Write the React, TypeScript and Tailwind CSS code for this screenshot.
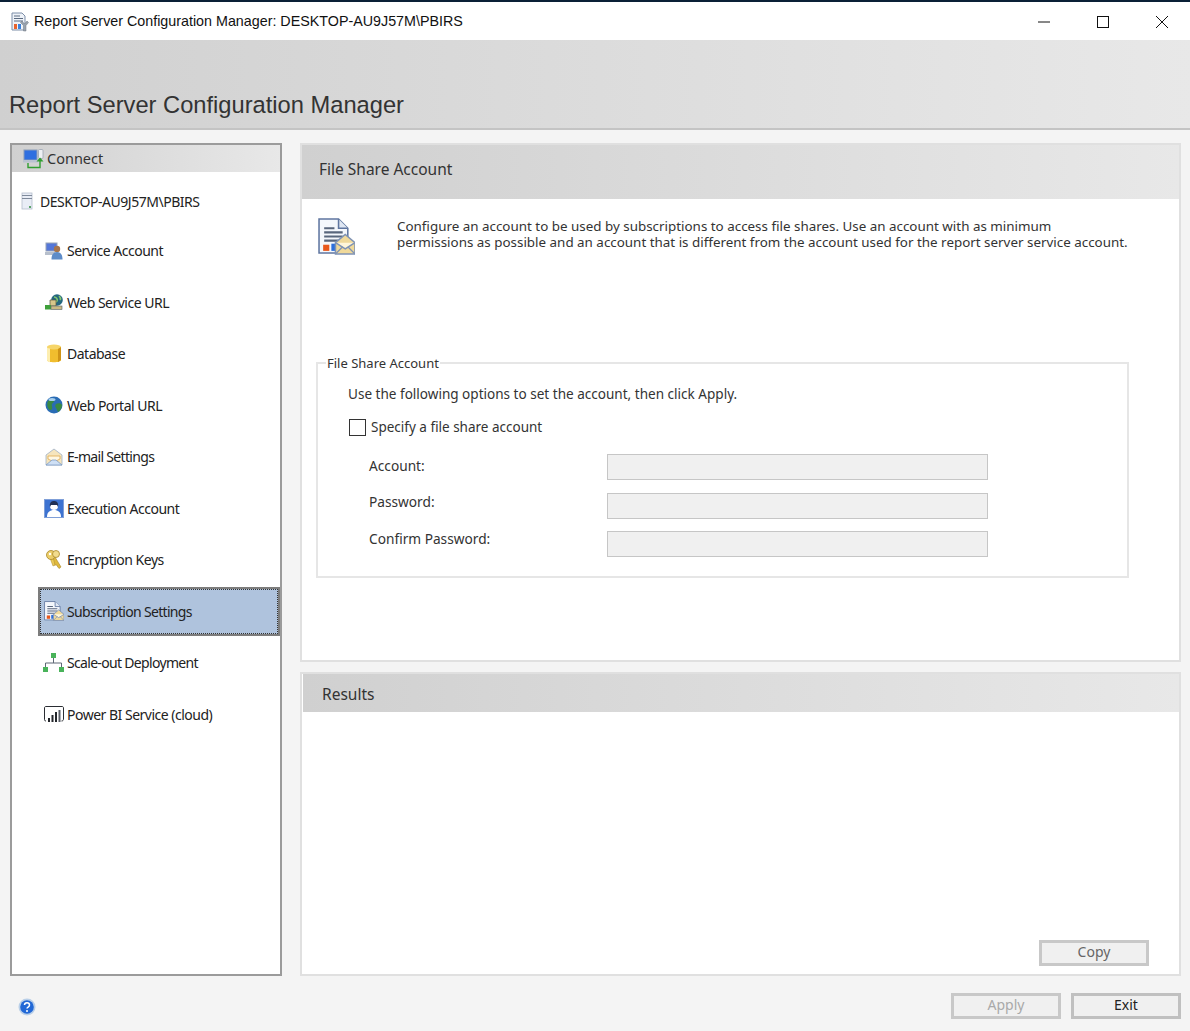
import type { ReactNode } from 'react';

const ui = 'font-["Noto_Sans",sans-serif]';

function ReportIcon({ size = 18 }: { size?: number }) {
  return (
    <svg width={size} height={size} viewBox="0 0 36 36">
      <path d="M1 1h19l9 9v24H1z" fill="#f4f7fc" stroke="#5f76a0" strokeWidth="1.5" />
      <path d="M20 1v9h9" fill="#dfe7f3" stroke="#5f76a0" strokeWidth="1.5" />
      <path d="M6 10h10M6 14h18M6 18h18M6 22h14" stroke="#58667c" strokeWidth="2" />
      <rect x="5" y="26" width="6" height="6" fill="#e8581c" />
      <rect x="13" y="25" width="6" height="7" fill="#2c6fdc" />
      <path d="M17 24l9.500-8 9.500 8v11H17z" fill="#f0d99a" stroke="#7f93b5" strokeWidth="1.500" />
      <path d="M17 24l9.500 6 9.500-6" fill="#fff6da" stroke="#7f93b5" strokeWidth="1.500" />
      <path d="M17 35l7-7M36 35l-7-7" stroke="#7f93b5" strokeWidth="1.200" />
    </svg>
  );
}

// icono de la ventana: hoja con barras y llave inglesa
function TitleIcon() {
  return (
    <svg width="19" height="20" viewBox="0 0 19 20">
      <path d="M1 1h10l3 3v14H1z" fill="#eef2f8" stroke="#7d8ea8" strokeWidth="1" />
      <path d="M3 4h6M3 6.500h9M3 9h9" stroke="#5a6a80" strokeWidth="1.200" />
      <rect x="3" y="12" width="3" height="5" fill="#e8622c" />
      <rect x="7" y="12" width="3" height="5" fill="#3b82dc" />
      <path d="M11 9l2.500 3 2.500-3 1.500 1.500-2.500 3V19h-2.500v-5.500l-3-3z" fill="#9aa3ad" stroke="#6c7680" strokeWidth="0.500" />
    </svg>
  );
}

function ConnectIcon() {
  return (
    <svg width="21" height="20" viewBox="0 0 21 20">
      <rect x="1" y="1" width="13" height="10" fill="#2f6fe0" stroke="#8a9bb8" />
      <rect x="0" y="11" width="15" height="2.500" fill="#b9c2d0" />
      <rect x="15.500" y="0.500" width="4.500" height="9" rx="1" fill="#eef0f4" stroke="#9aa3b1" strokeWidth="0.800" />
      <path d="M5 14v4.500h12v-7" fill="none" stroke="#2f9e2f" strokeWidth="1.400" />
      <path d="M13.500 12.500h7L17 8.500z" fill="#2f9e2f" />
    </svg>
  );
}

function ServerIcon() {
  return (
    <svg width="12" height="18" viewBox="0 0 12 18">
      <rect x="1" y="1" width="10" height="16" fill="#e9edf6" stroke="#b4bdcc" strokeWidth="0.800" />
      <path d="M1 3.500h10M1 6.500h10" stroke="#7f8a9b" strokeWidth="1.200" />
      <rect x="8" y="14" width="2" height="2" fill="#5aa469" />
    </svg>
  );
}

function ServiceIcon() {
  return (
    <svg width="18" height="18" viewBox="0 0 18 18">
      <rect x="1" y="1" width="11" height="8" fill="#5577d8" stroke="#98a3b6" />
      <rect x="0" y="10" width="10" height="3" fill="#b7bfcc" />
      <circle cx="12" cy="7" r="3.200" fill="#a7754c" />
      <path d="M6.500 17.500c0-5 2-7.500 5.500-7.500s5.500 2.500 5.500 7.500z" fill="#5e8cc8" />
    </svg>
  );
}

function WebServiceIcon() {
  return (
    <svg width="18" height="16" viewBox="0 0 18 16">
      <circle cx="12" cy="6" r="5.800" fill="#25677f" />
      <path d="M9 3c2 0 4 2 3 4s-3 1-3 3M14 2c1 1 2 3 1 4" stroke="#84c870" strokeWidth="1.600" fill="none" />
      <path d="M5 6h6v6H5z" fill="#d7c78a" stroke="#57533f" strokeWidth="0.700" />
      <rect x="0" y="11" width="6" height="4.500" fill="#3fa03a" />
      <rect x="6" y="12" width="11" height="3.500" fill="#c9ba83" stroke="#55606c" strokeWidth="0.600" />
    </svg>
  );
}

function DatabaseIcon() {
  return (
    <svg width="16" height="19" viewBox="0 0 16 19">
      <path d="M1 3v13c0 3 14 3 14 0V3z" fill="#f0bd2e" />
      <ellipse cx="8" cy="3" rx="7" ry="2.400" fill="#f6d569" />
      <path d="M1 3v13c0 1.400 2 2 3 2.300V4.600C2.500 4.300 1 3.700 1 3z" fill="#fdeeb0" />
      <path d="M12 5v13l3-2V3z" fill="#cf9417" />
    </svg>
  );
}

function GlobeIcon() {
  return (
    <svg width="18" height="18" viewBox="0 0 18 18">
      <circle cx="9" cy="9" r="8.500" fill="#2a6cb5" />
      <path d="M3 5c2-2 5-2 6-1s-1 3-2 4 1 3 0 5-3 1-4-1-1-5 0-7zM11 8c2-1 5-1 6 1 0 3-2 6-4 7-1-2-1-3-2-4s-1-3 0-4z" fill="#3a8a44" />
      <ellipse cx="7" cy="3.500" rx="3.500" ry="1.600" fill="#a9d0ee" />
    </svg>
  );
}

function MailIcon() {
  return (
    <svg width="18" height="18" viewBox="0 0 18 18">
      <path d="M1 7l8-6 8 6v10H1z" fill="#f6e5bd" stroke="#9fb1c8" strokeWidth="0.800" />
      <path d="M3 8h12v3l-6 3-6-3z" fill="#fff7e2" stroke="#e0a94f" strokeWidth="0.800" />
      <path d="M1 17l6-5h4l6 5z" fill="#cfe0f5" stroke="#7f9cc4" strokeWidth="0.800" />
    </svg>
  );
}

function ExecutionIcon() {
  return (
    <svg width="20" height="19" viewBox="0 0 20 19">
      <rect x="0.500" y="0.500" width="19" height="18" fill="#3d73d1" stroke="#7f9fd8" />
      <circle cx="10" cy="7" r="4" fill="#fff" />
      <path d="M6 8c-1-5 2-6 4-6s5 1 4 6l-1-2H7z" fill="#1f2f55" />
      <path d="M3 18c0-5 3-7 7-7s7 2 7 7z" fill="#fff" />
    </svg>
  );
}

function KeysIcon() {
  return (
    <svg width="18" height="19" viewBox="0 0 18 19">
      <path d="M10 7l6 10-2 1.500-3-4-1 1-1-2-2-3z" fill="#e0b93c" stroke="#a8872a" strokeWidth="0.600" />
      <path d="M5 8l3 8 2-1-2-8z" fill="#eccb58" stroke="#a8872a" strokeWidth="0.500" />
      <circle cx="6" cy="5" r="4.500" fill="#ecce6a" stroke="#a8872a" strokeWidth="0.800" />
      <circle cx="11" cy="4" r="3.500" fill="#f2dc8d" stroke="#a8872a" strokeWidth="0.800" />
      <circle cx="5" cy="4" r="1.200" fill="#fff" />
    </svg>
  );
}

function TreeIcon() {
  return (
    <svg width="21" height="19" viewBox="0 0 21 19">
      <path d="M10.500 5v5M2.500 14v-4h16v4" fill="none" stroke="#5e6876" strokeWidth="1" />
      <rect x="8" y="0" width="5" height="5" fill="#49b35a" />
      <rect x="0" y="14" width="5" height="5" fill="#49b35a" />
      <rect x="16" y="14" width="5" height="5" fill="#49b35a" />
    </svg>
  );
}

function ChartIcon() {
  return (
    <svg width="20" height="17" viewBox="0 0 20 17">
      <path d="M2 15C0.500 15 0.500 14 0.500 13V2C0.500 1 1 0.500 2 0.500h16c1 0 1.500 .5 1.500 1.500v11c0 1-.5 2-2 2" fill="#fff" stroke="#2a2d33" strokeWidth="1" />
      <rect x="4" y="12" width="2" height="4" fill="#22252a" />
      <rect x="7.500" y="9" width="2" height="7" fill="#22252a" />
      <rect x="11" y="6" width="2" height="10" fill="#22252a" />
      <rect x="14.500" y="4" width="2" height="12" fill="#5a5f68" />
    </svg>
  );
}

function HelpIcon() {
  return (
    <svg width="18" height="18" viewBox="0 0 18 18">
      <circle cx="9" cy="9" r="8.500" fill="#b9cfe8" />
      <circle cx="9" cy="9" r="6.800" fill="#2268d6" />
      <path d="M6.500 7c0-3 5-3 5 0 0 2-2.500 2-2.500 3.500" fill="none" stroke="#fff" strokeWidth="1.500" />
      <circle cx="9" cy="13" r="1" fill="#fff" />
    </svg>
  );
}

function NavItem({ icon, label, active, tight }: { icon: ReactNode; label: string; active?: boolean; tight?: boolean }) {
  return (
    <div className="flex h-[51.5px] items-center">
      <div
        className={`flex h-[49px] w-full items-center ${
          active ? 'border-2 border-[#7c7c7c] bg-[#afc3dd] outline-1 -outline-offset-3 outline-dotted outline-[#333]' : 'border-2 border-transparent'
        }`}
      >
        <span className="flex w-[27px] shrink-0 justify-center">{icon}</span>
        <span className={`text-[14px] text-[#222] ${tight ? 'tracking-[-0.68px]' : 'tracking-[-0.5px]'}`}>{label}</span>
      </div>
    </div>
  );
}

function Field({ label, labelClass }: { label: string; labelClass: string }) {
  return (
    <div className="flex items-center">
      <span className={`w-[238px] text-[13.7px] leading-[16px] text-[#333] ${labelClass}`}>{label}</span>
      <div className="h-[26px] w-[381px] border border-[#c6c6c6] bg-[#f0f0f0]" />
    </div>
  );
}

function WinButton({ label, disabled, dark }: { label: string; disabled?: boolean; dark?: boolean }) {
  return (
    <button
      className={`h-[26px] w-[110px] border-[3px] bg-[#f0f0f0] pb-[2px] text-[14px] leading-none ${
        dark ? 'border-[#c0c0c0] text-[#222]' : disabled ? 'border-[#c8c8c8] text-[#a9a9a9]' : 'border-[#c8c8c8] text-[#666]'
      }`}
    >
      {label}
    </button>
  );
}

export default function App() {
  return (
    <div className={`${ui} flex h-[1031px] w-[1190px] flex-col overflow-hidden border-t-2 border-[#0a2036] bg-[#f4f4f4]`}>
      {/* barra de titulo */}
      <div className="flex h-[38px] shrink-0 items-center bg-white pl-[11px] pt-[1px]">
        <TitleIcon />
        <span className="ml-[4px] font-['Liberation_Sans',sans-serif] text-[14.3px] text-[#111]">
          Report Server Configuration Manager: DESKTOP-AU9J57M\PBIRS
        </span>
        <div className="ml-auto flex items-center">
          <svg width="14" height="14" viewBox="0 0 14 14" className="mr-[45px]">
            <path d="M1 7h12" stroke="#111" strokeWidth="1" />
          </svg>
          <svg width="14" height="14" viewBox="0 0 14 14" className="mr-[45px]">
            <rect x="1.500" y="1.500" width="11" height="11" fill="none" stroke="#111" strokeWidth="1" />
          </svg>
          <svg width="14" height="14" viewBox="0 0 14 14" className="mr-[21px]">
            <path d="M1 1l12 12M13 1L1 13" stroke="#111" strokeWidth="1" />
          </svg>
        </div>
      </div>

      <div className="flex h-[90px] shrink-0 items-end border-b-2 border-[#c4c4c4] bg-gradient-to-r from-[#d0d0d0] to-[#e8e8e8] pb-[9px] pl-[9px]">
        <h1 className="font-['Liberation_Sans',sans-serif] text-[23.7px] leading-7 text-[#333]">Report Server Configuration Manager</h1>
      </div>

      <div className="mt-[13px] flex h-[833px] shrink-0 gap-[18px] pl-[10px] pr-[9px]">
        {/* panel izquierdo */}
        <aside className="h-[833px] w-[272px] shrink-0 border-2 border-[#9b9b9b] bg-white">
          <div className="flex h-[27px] items-center bg-gradient-to-r from-[#d0d0d0] to-[#e8e8e8] pl-[11px]">
            <ConnectIcon />
            <span className="ml-[3px] text-[14.5px] text-[#333]">Connect</span>
          </div>
          <div className="flex h-[53px] items-center pl-[9px] pt-[5px]">
            <ServerIcon />
            <span className="ml-[7px] text-[14px] tracking-[-0.47px] text-[#222]">DESKTOP-AU9J57M\PBIRS</span>
          </div>
          <nav className="pl-[26px]">
            <NavItem icon={<ServiceIcon />} label="Service Account" />
            <NavItem icon={<WebServiceIcon />} label="Web Service URL" />
            <NavItem icon={<DatabaseIcon />} label="Database" />
            <NavItem icon={<GlobeIcon />} label="Web Portal URL" />
            <NavItem icon={<MailIcon />} label="E-mail Settings" tight />
            <NavItem icon={<ExecutionIcon />} label="Execution Account" />
            <NavItem icon={<KeysIcon />} label="Encryption Keys" />
            <NavItem icon={<ReportIcon size={20} />} label="Subscription Settings" active tight />
            <NavItem icon={<TreeIcon />} label="Scale-out Deployment" tight />
            <NavItem icon={<ChartIcon />} label="Power BI Service (cloud)" />
          </nav>
        </aside>

        {/* panel derecho */}
        <main className="flex w-[881px] shrink-0 flex-col gap-[10px]">
          <section className="flex h-[519px] shrink-0 flex-col border-2 border-[#e0e0e0] bg-white">
            <div className="flex h-[54px] shrink-0 items-center bg-gradient-to-r from-[#d0d0d0] to-[#e8e8e8] pb-[4px] pl-[17px]">
              <h2 className="text-[15.5px] text-[#333]">File Share Account</h2>
            </div>
            <div className="flex pl-[16px] pt-[19px]">
              <ReportIcon size={37} />
              <p className="ml-[42px] text-[13.4px] leading-[16px] text-[#333]">
                Configure an account to be used by subscriptions to access file shares. Use an account with as minimum
                <br />
                permissions as possible and an account that is different from the account used for the report server service account.
              </p>
            </div>
            <fieldset className="ml-[14px] mt-[100px] h-[223px] w-[813px] border-2 border-[#e6e6e6] pl-[30px]">
              <legend className="-ml-[22px] px-[1px] text-[13px] leading-[16px] text-[#333]">File Share Account</legend>
              <p className="mt-[14px] text-[13.55px] leading-[18px] text-[#333]">Use the following options to set the account, then click Apply.</p>
              <label className="ml-[1px] mt-[14px] flex items-center">
                <span className="h-[17px] w-[17px] border border-[#333] bg-white" />
                <span className="ml-[5px] text-[13.5px] text-[#333]">Specify a file share account</span>
              </label>
              <div className="ml-[21px] mt-[17px] flex flex-col gap-[12.5px]">
                <Field label="Account:" labelClass="mb-[2px]" />
                <Field label="Password:" labelClass="mb-[8px]" />
                <Field label="Confirm Password:" labelClass="mb-[10px]" />
              </div>
            </fieldset>
          </section>

          <section className="flex h-[304px] shrink-0 flex-col border-2 border-[#e0e0e0] bg-white">
            <div className="ml-[1px] flex h-[38px] shrink-0 items-center bg-gradient-to-r from-[#d0d0d0] to-[#e8e8e8] pl-[19px] pt-[3px]">
              <h2 className="text-[15.5px] text-[#333]">Results</h2>
            </div>
            <div className="mt-auto flex justify-end pb-[8px] pr-[30px]">
              <WinButton label="Copy" />
            </div>
          </section>
        </main>
      </div>

      <div className="flex items-start justify-between pl-[18px] pr-[9px] pt-[17px]">
        <span className="mt-[5px]">
          <HelpIcon />
        </span>
        <div className="flex gap-[10px]">
          <WinButton label="Apply" disabled />
          <WinButton label="Exit" dark />
        </div>
      </div>
    </div>
  );
}
